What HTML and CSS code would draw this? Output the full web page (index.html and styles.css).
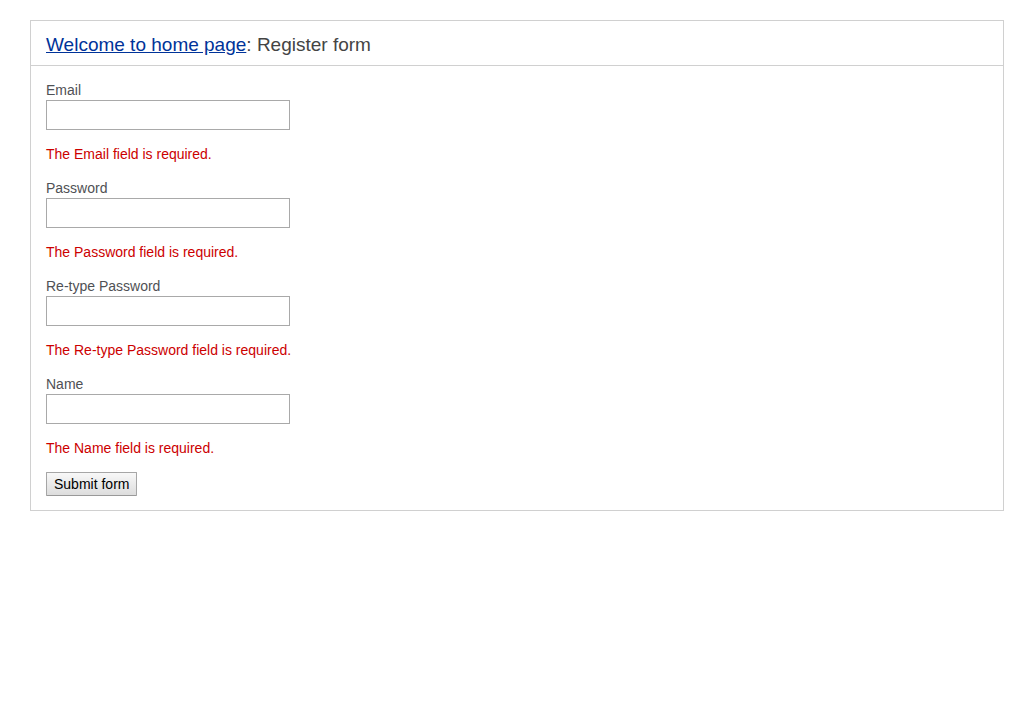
FILE: index.html
```
<!DOCTYPE html>
<html lang="en">
<head>
<meta charset="utf-8">
<meta name="viewport" content="width=device-width, initial-scale=1">
<title>Register form</title>
<link rel="stylesheet" href="styles.css">
</head>
<body>
<main class="container">
<h1 class="title"><a href="#">Welcome to home page</a>: Register form</h1>
<form class="form" novalidate>
<div class="field"><label for="email">Email</label><input type="text" id="email" name="email" aria-describedby="email-error"></div>
<p class="error" id="email-error">The Email field is required.</p>
<div class="field"><label for="password">Password</label><input type="password" id="password" name="password" aria-describedby="password-error"></div>
<p class="error" id="password-error">The Password field is required.</p>
<div class="field"><label for="repassword">Re-type Password</label><input type="password" id="repassword" name="repassword" aria-describedby="repassword-error"></div>
<p class="error" id="repassword-error">The Re-type Password field is required.</p>
<div class="field"><label for="name">Name</label><input type="text" id="name" name="name" aria-describedby="name-error"></div>
<p class="error" id="name-error">The Name field is required.</p>
<button class="submit" type="submit">Submit form</button>
</form>
</main>
</body>
</html>
```
FILE: styles.css
```
body {
  margin: 20px 30px;
  background: #fff;
  color: #4f5155;
  font: 14px/20px "Liberation Sans", Arial, Helvetica, sans-serif;
}

.container {
  border: 1px solid #d0d0d0;
  box-shadow: 0 0 8px #d0d0d0;
}

.title {
  margin: 0;
  padding: 14px 15px 10px;
  border-bottom: 1px solid #d0d0d0;
  color: #444;
  font-size: 19px;
  font-weight: normal;
}

.title a {
  color: #003399;
}

.form {
  display: flex;
  flex-direction: column;
  align-items: flex-start;
  gap: 14px;
  padding: 14px 15px;
}

.field {
  display: flex;
  flex-direction: column;
  align-items: flex-start;
}

.field input {
  box-sizing: border-box;
  width: 244px;
  height: 30px;
  padding: 5px;
  border: 1px solid #a9a9a9;
  background: #fff;
  font: inherit;
}

.error {
  margin: 0;
  color: #cc0000;
}

.submit {
  box-sizing: border-box;
  height: 24px;
  padding: 0 7px;
  border: 1px solid #a6a6a6;
  border-bottom-color: #999;
  border-radius: 1px;
  background: linear-gradient(#f8f8f8, #dddddd);
  color: #000;
  font: inherit;
}
```
